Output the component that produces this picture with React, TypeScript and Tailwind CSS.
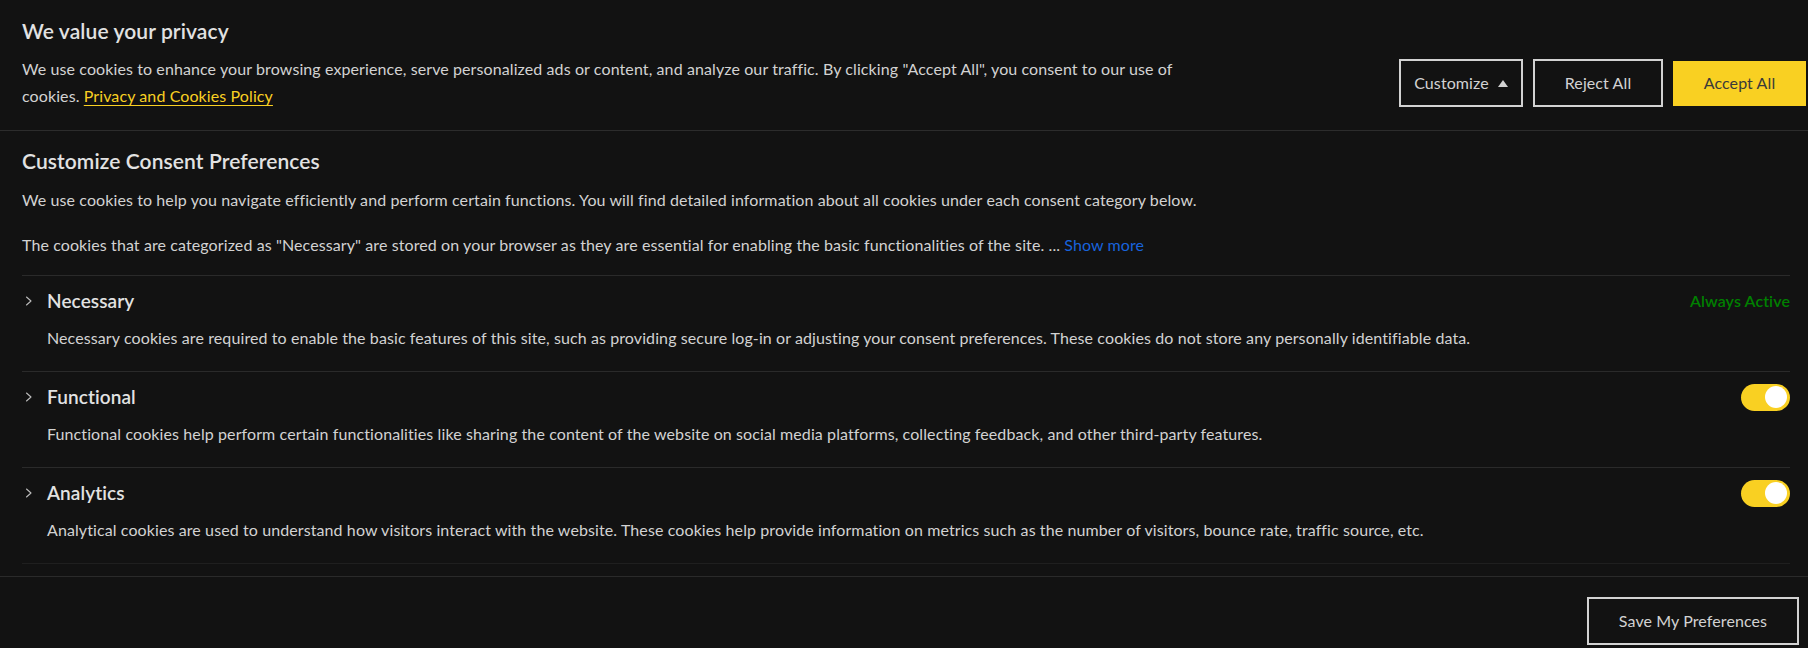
import React, { useState } from 'react';

const font = { fontFamily: 'Lato, "Liberation Sans", sans-serif' };

interface Category {
  id: string;
  title: string;
  description: string;
  alwaysActive?: boolean;
}

const categories: Category[] = [
  {
    id: 'necessary',
    title: 'Necessary',
    description:
      'Necessary cookies are required to enable the basic features of this site, such as providing secure log-in or adjusting your consent preferences. These cookies do not store any personally identifiable data.',
    alwaysActive: true,
  },
  {
    id: 'functional',
    title: 'Functional',
    description:
      'Functional cookies help perform certain functionalities like sharing the content of the website on social media platforms, collecting feedback, and other third-party features.',
  },
  {
    id: 'analytics',
    title: 'Analytics',
    description:
      'Analytical cookies are used to understand how visitors interact with the website. These cookies help provide information on metrics such as the number of visitors, bounce rate, traffic source, etc.',
  },
];

const Chevron = () => (
  <svg width="8" height="10" viewBox="0 0 8 10" fill="none" className="shrink-0 ml-[3px]">
    <path d="M1.5 1 L6 5 L1.5 9" stroke="#bdbdbd" strokeWidth="1.1" strokeLinecap="round" strokeLinejoin="round" />
  </svg>
);

const Toggle = ({ on, onChange }: { on: boolean; onChange: () => void }) => (
  <button
    onClick={onChange}
    className={`relative w-[49px] h-[27px] rounded-full shrink-0 ${on ? 'bg-[#f9d022]' : 'bg-[#555]'}`}
  >
    <span
      className={`absolute top-[2.5px] w-[22px] h-[22px] rounded-full bg-white ${on ? 'right-[3px]' : 'left-[3px]'}`}
    />
  </button>
);

const App: React.FC = () => {
  const [enabled, setEnabled] = useState<Record<string, boolean>>({ functional: true, analytics: true });

  return (
    <div className="min-h-screen w-full bg-[#121212] text-[#d2d2d2] text-[16px] tracking-[0.1px]" style={font}>
      {/* banner */}
      <div className="pl-[22px] pr-[2px] pt-[17px] pb-[21px] border-b border-[#2c2c2c]">
        <h2 className="text-[21px] leading-[28px] font-semibold text-[#e2e2e2]">We value your privacy</h2>
        <div className="mt-[10px] flex items-center justify-between">
          <p className="w-[1190px] leading-[27px]">
            We use cookies to enhance your browsing experience, serve personalized ads or content, and analyze our traffic. By
            clicking "Accept All", you consent to our use of cookies.{' '}
            <a href="#" className="text-[#f9d022] underline underline-offset-[3px]">Privacy and Cookies Policy</a>
          </p>
          <div className="flex items-center gap-[10px] mt-[2px]">
            <button className="w-[124px] h-[48px] border-2 border-[#d2d2d2] text-[#d2d2d2] flex items-center justify-center gap-[9px]">
              Customize
              <svg width="10" height="7" viewBox="0 0 10 7">
                <path d="M5 0 L10 7 L0 7 Z" fill="#d2d2d2" />
              </svg>
            </button>
            <button className="w-[130px] h-[48px] border-2 border-[#d2d2d2] text-[#d2d2d2]">Reject All</button>
            <button className="w-[133px] h-[45px] bg-[#f9d022] text-[#3a3a3a]">Accept All</button>
          </div>
        </div>
      </div>

      {/* preferences */}
      <div className="pl-[22px] pr-[18px] pt-[16px] pb-[12px]">
        <h2 className="text-[21px] leading-[28px] font-semibold text-[#e2e2e2]">Customize Consent Preferences</h2>
        <p className="mt-[13px] leading-[24px]">
          We use cookies to help you navigate efficiently and perform certain functions. You will find detailed information about
          all cookies under each consent category below.
        </p>
        <p className="mt-[21px] leading-[24px]">
          The cookies that are categorized as "Necessary" are stored on your browser as they are essential for enabling the basic
          functionalities of the site. ... <span className="text-[#1863dc]">Show more</span>
        </p>
        <div className="mt-[18px] border-b border-[#1f1f1f]">
          {categories.map(c => (
            <div key={c.id} className="border-t border-[#2a2a2a] pt-[13px] pb-[21px]">
              <div className="h-[24px] flex items-center justify-between">
                <div className="flex items-center">
                  <Chevron />
                  <span className="ml-[14px] text-[19px] font-semibold text-[#e2e2e2]">{c.title}</span>
                </div>
                {c.alwaysActive ? (
                  <span className="text-[#008000] font-semibold">Always Active</span>
                ) : (
                  <Toggle
                    on={!!enabled[c.id]}
                    onChange={() => setEnabled(s => ({ ...s, [c.id]: !s[c.id] }))}
                  />
                )}
              </div>
              <p className="mt-[13px] pl-[25px] leading-[24px]">{c.description}</p>
            </div>
          ))}
        </div>
      </div>

      {/* footer */}
      <div className="border-t border-[#2a2a2a] pt-[20px] pr-[9px] flex justify-end">
        <button className="w-[212px] h-[48px] border-2 border-[#d2d2d2] text-[#d2d2d2]">Save My Preferences</button>
      </div>
    </div>
  );
};

export default App;
